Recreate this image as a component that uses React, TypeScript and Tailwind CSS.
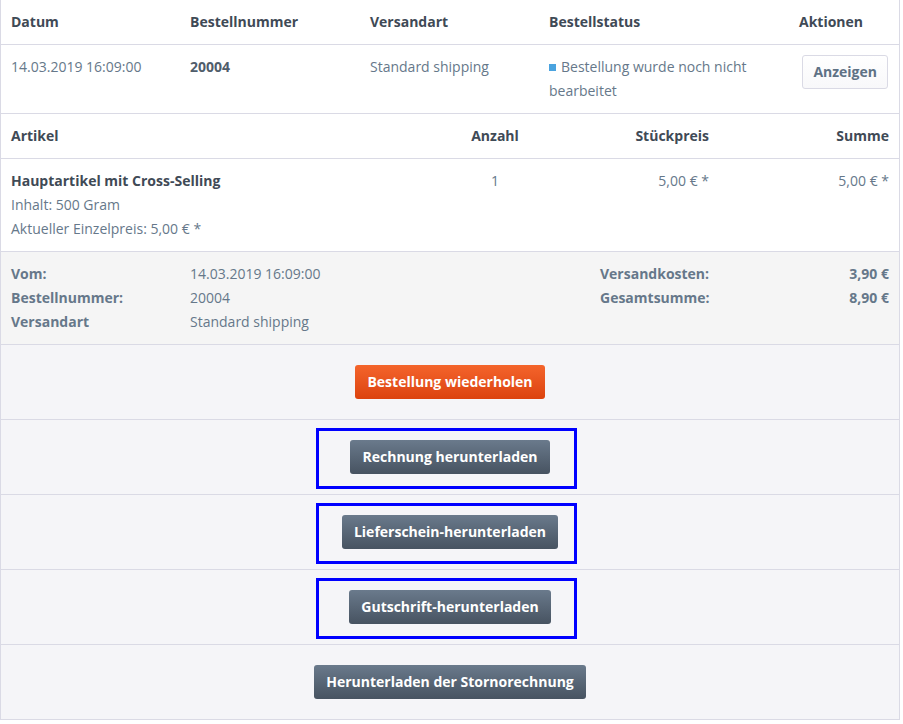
import React from "react";

const orderCols = "grid grid-cols-[179px_180px_179px_250px_1fr]";
const itemCols = "grid grid-cols-[430px_108px_160px_1fr]";

function DocButton({ label, marked }: { label: string; marked?: boolean }) {
  return (
    <div className="relative flex justify-center border-b border-[#dadae5] bg-[#f5f5f8] py-5">
      {marked && (
        <div className="absolute left-[315px] top-[8px] h-[61px] w-[261px] border-[3px] border-[#0000ff]" />
      )}
      <button
        type="button"
        className="h-[34px] rounded-[3px] bg-linear-to-b from-[#6a7a8c] to-[#475361] px-3 text-sm font-bold text-white"
      >
        {label}
      </button>
    </div>
  );
}

export default function App() {
  return (
    <div
      className="w-[900px] bg-white text-sm leading-6 text-[#66788a]"
      style={{ fontFamily: '"Open Sans", "Liberation Sans", sans-serif' }}
    >
      <div className="border-x border-[#dadae5]">
        {/* Order head */}
        <div className={`${orderCols} border-b border-[#dadae5] px-[10px] py-[10px] font-bold text-[#3f4a56]`}>
          <div>Datum</div>
          <div>Bestellnummer</div>
          <div>Versandart</div>
          <div>Bestellstatus</div>
          <div>Aktionen</div>
        </div>

        {/* Order row */}
        <div className={`${orderCols} border-b border-[#dadae5] px-[10px] py-[10px]`}>
          <div>14.03.2019 16:09:00</div>
          <div className="font-bold text-[#505d6b]">20004</div>
          <div>Standard shipping</div>
          <div className="pr-4">
            <span className="mr-[5px] inline-block h-[7px] w-[7px] bg-[#4aa3df] align-[1px]" />
            Bestellung wurde noch nicht bearbeitet
          </div>
          <div className="flex justify-end pr-[1px]">
            <button
              type="button"
              className="h-[34px] rounded-[3px] border border-[#dadae5] bg-linear-to-b from-white to-[#f8f8fa] px-[10px] font-bold text-[#5f7285]"
            >
              Anzeigen
            </button>
          </div>
        </div>

        {/* Items head */}
        <div className={`${itemCols} border-b border-[#dadae5] px-[10px] py-[10px] font-bold text-[#3f4a56]`}>
          <div>Artikel</div>
          <div className="text-center">Anzahl</div>
          <div className="text-right">Stückpreis</div>
          <div className="text-right">Summe</div>
        </div>

        {/* Item */}
        <div className={`${itemCols} border-b border-[#dadae5] px-[10px] py-[10px]`}>
          <div>
            <div className="font-bold text-[#3f4a56]">Hauptartikel mit Cross-Selling</div>
            <div>Inhalt: 500 Gram</div>
            <div>Aktueller Einzelpreis: 5,00 € *</div>
          </div>
          <div className="text-center">1</div>
          <div className="text-right">5,00 € *</div>
          <div className="text-right">5,00 € *</div>
        </div>

        {/* Summary */}
        <div className="flex border-b border-[#dadae5] bg-[#f5f5f5] px-[10px] py-[10px]">
          <div className="grid grid-cols-[179px_auto]">
            <div className="font-bold">Vom:</div>
            <div>14.03.2019 16:09:00</div>
            <div className="font-bold">Bestellnummer:</div>
            <div>20004</div>
            <div className="font-bold">Versandart</div>
            <div>Standard shipping</div>
          </div>
          <div className="ml-auto grid h-fit w-[289px] grid-cols-[1fr_auto] font-bold">
            <div>Versandkosten:</div>
            <div className="text-right">3,90 €</div>
            <div>Gesamtsumme:</div>
            <div className="text-right">8,90 €</div>
          </div>
        </div>

        {/* Actions */}
        <div className="flex justify-center border-b border-[#dadae5] bg-[#f5f5f8] py-5">
          <button
            type="button"
            className="h-[34px] rounded-[3px] bg-linear-to-b from-[#f4642b] to-[#dc420d] px-3 font-bold text-white"
          >
            Bestellung wiederholen
          </button>
        </div>
        <DocButton label="Rechnung herunterladen" marked />
        <DocButton label="Lieferschein-herunterladen" marked />
        <DocButton label="Gutschrift-herunterladen" marked />
        <DocButton label="Herunterladen der Stornorechnung" />
      </div>
    </div>
  );
}
